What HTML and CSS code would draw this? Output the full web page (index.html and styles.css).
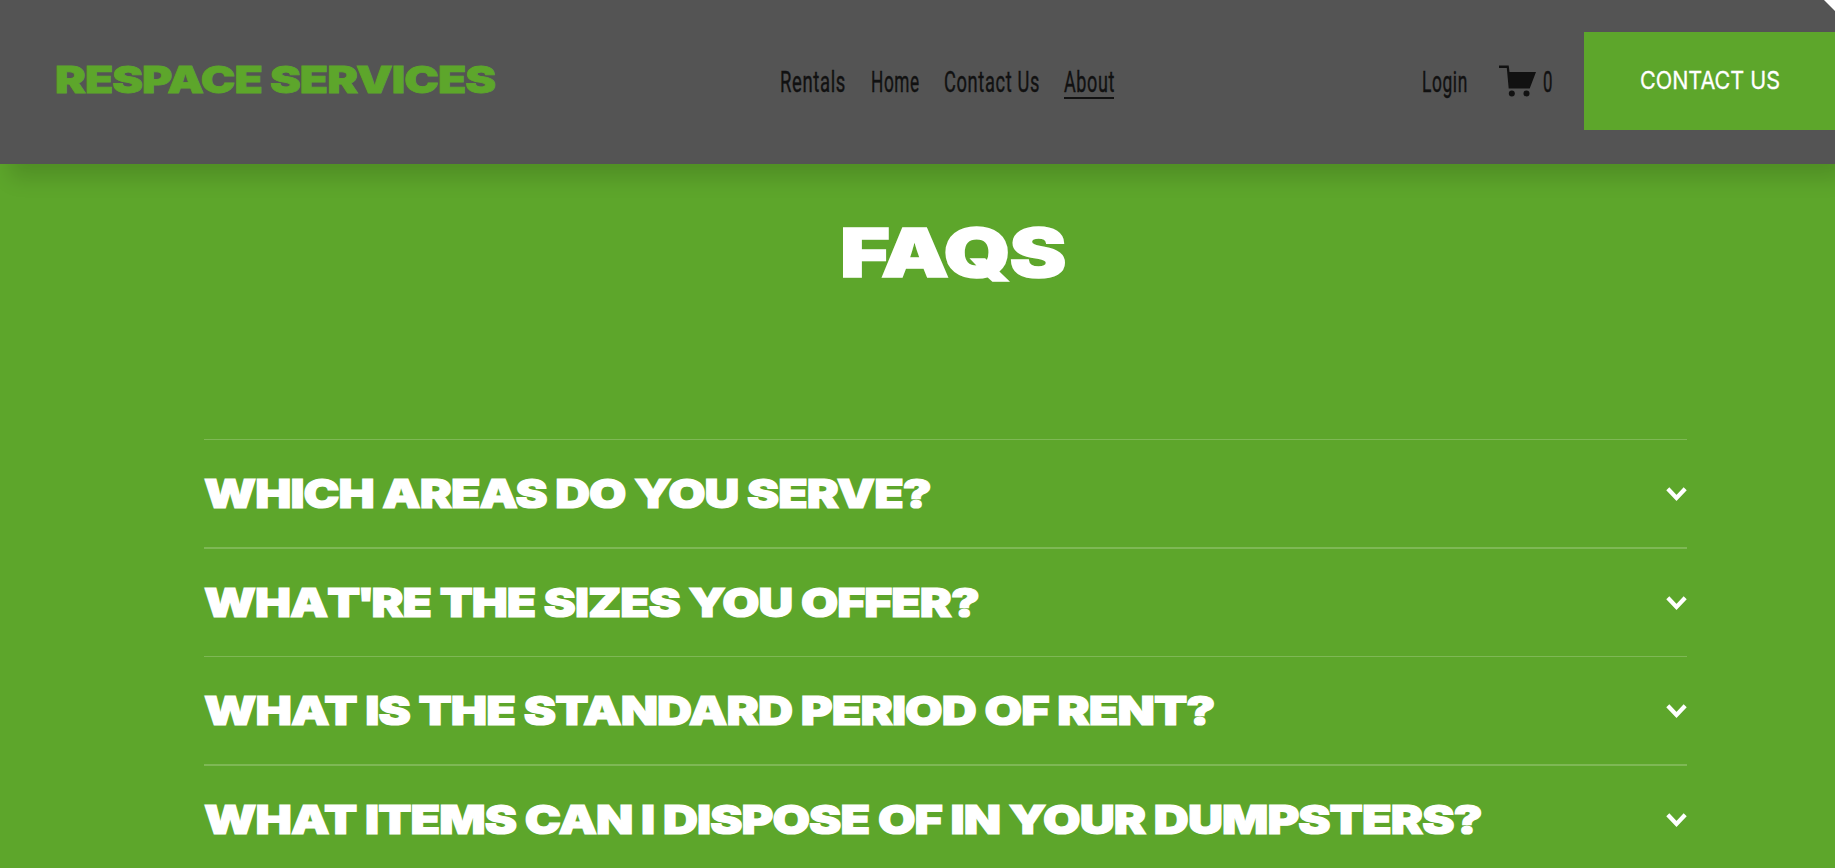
FILE: index.html
```html
<!DOCTYPE html>
<html lang="en">
<head>
<meta charset="utf-8">
<title>FAQs</title>
<link rel="stylesheet" href="styles.css">
</head>
<body>
<header class="header">
  <a class="brand"><span class="fit">RESPACE SERVICES</span></a>
  <nav class="nav">
    <a class="link rentals"><span class="fit">Rentals</span></a>
    <a class="link home"><span class="fit">Home</span></a>
    <a class="link contact"><span class="fit">Contact Us</span></a>
    <a class="link about"><span class="fit">About</span></a>
  </nav>
  <a class="link login"><span class="fit">Login</span></a>
  <a class="cart">
    <svg class="cart-icon" viewBox="0 0 38 32"><path d="M0 .6h9.7l.8 6.4H37l-6.3 16.4H9.7L7.8 3H0z"/><circle cx="12.8" cy="28.4" r="3"/><circle cx="27.5" cy="28.4" r="3"/></svg>
    <span class="link count"><span class="fit">0</span></span>
  </a>
  <a class="button"><span class="fit">CONTACT US</span></a>
  <svg class="corner" viewBox="0 0 11 11"><path d="M0 0h11v11z"/></svg>
</header>
<main class="faq">
  <h1 class="title"><span class="fit">FAQS</span></h1>
  <ul class="list">
    <li class="item thin"><h2 class="question q1"><span class="fit">WHICH AREAS DO YOU SERVE?</span></h2><svg class="chevron" viewBox="0 0 21 15"><path d="M1.8 1.8l8.7 9.2 8.7-9.2"/></svg></li>
    <li class="item"><h2 class="question q2"><span class="fit">WHA<span class="tight">T'</span>RE THE SIZES YOU OFFER?</span></h2><svg class="chevron" viewBox="0 0 21 15"><path d="M1.8 1.8l8.7 9.2 8.7-9.2"/></svg></li>
    <li class="item thin"><h2 class="question q3"><span class="fit">WHAT IS THE STANDARD PERIOD OF RENT?</span></h2><svg class="chevron" viewBox="0 0 21 15"><path d="M1.8 1.8l8.7 9.2 8.7-9.2"/></svg></li>
    <li class="item"><h2 class="question q4"><span class="fit">WHAT ITEMS CAN I DISPOSE OF IN YOUR DUMPSTERS?</span></h2><svg class="chevron" viewBox="0 0 21 15"><path d="M1.8 1.8l8.7 9.2 8.7-9.2"/></svg></li>
  </ul>
</main>
</body>
</html>
```
FILE: styles.css
```css
* { box-sizing: border-box; }
body { margin: 0; height: 868px; overflow: hidden; background: #5da62b; color: #fff; font-family: Inter, sans-serif; }
.fit { display: inline-block; white-space: nowrap; transform-origin: 0 50%; }
.header { position: relative; display: flex; align-items: flex-start; height: 164px; padding-left: 54.5px; background: #545454; box-shadow: 10px 14px 20px rgba(0,0,0,.14); }
.header > * { flex-shrink: 0; }
.brand { width: 725.5px; padding-top: 57px; color: #5da62b; font-size: 37px; line-height: 45px; font-weight: 900; letter-spacing: -.8px; -webkit-text-stroke: .8px; }
.brand .fit { transform: scaleX(1.251); }
.nav { display: flex; gap: 24.5px; width: 642px; }
.link { color: #111; font-family: Roboto, sans-serif; font-size: 29px; line-height: 40px; padding-top: 62px; letter-spacing: 1px; height: 99px; -webkit-text-stroke: .4px; }
.rentals { width: 66.5px; }
.rentals .fit { transform: scaleX(.638); }
.home { width: 48.5px; }
.home .fit { transform: scaleX(.595); }
.contact { width: 95.5px; }
.contact .fit { transform: scaleX(.63); }
.about { width: 50px; border-bottom: 2px solid #111; }
.about .fit { transform: scaleX(.62); }
.login { width: 77px; }
.login .fit { transform: scaleX(.6); }
.cart { display: flex; width: 85px; }
.cart-icon { width: 38px; height: 32px; margin: 65px 6px 0 0; fill: #111; }
.count .fit { transform: scaleX(.58); }
.button { display: block; width: 251px; height: 98px; margin-top: 32px; padding-left: 56px; background: #5da62b; font-size: 24.5px; line-height: 97px; -webkit-text-stroke: .3px; }
.button .fit { transform: scaleX(.878); }
.corner { position: absolute; top: 0; right: 0; width: 11px; height: 11px; fill: #fff; }
.title { margin: 0; padding: 45px 0 0 840px; font-size: 68px; line-height: 86px; font-weight: 900; letter-spacing: -1px; -webkit-text-stroke: 1.6px; }
.title .fit { transform: scaleX(1.257); }
.list { list-style: none; margin: 144px 148px 0 204px; padding: 0; }
.item { display: flex; justify-content: space-between; height: 109px; border-top: 2px solid #7eb855; }
.item.thin { height: 108px; border-top-width: 1px; }
.question { margin: 0; font-size: 40px; line-height: 108px; font-weight: 900; letter-spacing: -.8px; -webkit-text-stroke: 1.2px; }
.tight { letter-spacing: -2.8px; }
.q1 .fit { transform: scaleX(1.205); }
.q2 .fit { transform: scaleX(1.201); }
.q3 .fit { transform: scaleX(1.214); }
.q4 .fit { transform: scaleX(1.213); }
.chevron { width: 21px; height: 15px; margin-top: 47px; fill: none; stroke: #fff; stroke-width: 4.2; }
```
